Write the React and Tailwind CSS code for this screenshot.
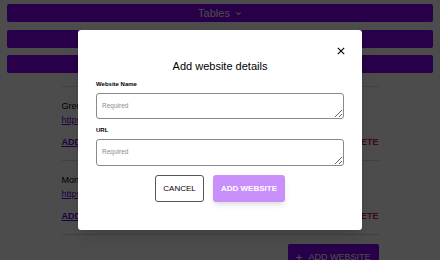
import React from 'react'

const websites = [
    { id: 1, name: 'Grenville Studio', url: 'https://grenvillestudio.com' },
    { id: 2, name: 'Monarch Travel', url: 'https://monarchtravel.co.uk' },
]

const WebsiteRow = ({ site }) => (
    <div className='border-b border-[#d9d9d9] pt-[12px] pb-[11px]'>
        <p className='text-[9px] leading-[14px] text-black'>{site.name}</p>
        <a href='#' className='block text-[9px] leading-[14px] text-[#6a00d8] underline'>{site.url}</a>
        <div className='mt-[8px] flex items-center justify-between text-[9px] leading-[14px] font-bold'>
            <a href='#' className='text-[#6a00d8] underline'>ADD CREDENTIALS</a>
            <a href='#' className='text-[#d4145a]'>DELETE</a>
        </div>
    </div>
)

const App = () => {
    return (
        <div className='relative h-[260px] w-[440px] overflow-hidden bg-white' style={{ fontFamily: '"Liberation Sans", Arial, sans-serif' }}>

            <div className='flex flex-col gap-[7.5px] px-[7px] pt-[4px]'>
                <div className='flex h-[18px] items-center justify-center gap-[5px] rounded-[2px] bg-[#8400f4] text-[11px] text-white'>
                    <span>Tables</span>
                    <svg width='7' height='7' viewBox='0 0 10 10' fill='none' stroke='currentColor' strokeWidth='1.6'><path d='M2 3.5 5 6.5 8 3.5' /></svg>
                </div>
                <div className='h-[18px] rounded-[2px] bg-[#8400f4]'></div>
                <div className='h-[18px] rounded-[2px] bg-[#8400f4]'></div>
            </div>

            <div className='mx-auto mt-[13px] w-[317px]'>
                <div className='border-t border-[#d9d9d9]'>
                    {websites.map((site) => (
                        <WebsiteRow key={site.id} site={site} />
                    ))}
                </div>
                <div className='mt-[9px] flex justify-end'>
                    <button className='flex h-[28px] w-[91px] items-center justify-center gap-[6px] rounded-[2px] bg-[#8400f4] text-[9px] text-white'>
                        <span className='text-[12px] leading-none'>+</span>
                        <span>ADD WEBSITE</span>
                    </button>
                </div>
            </div>

            {/* modal */}
            <div className='absolute inset-0 flex items-center justify-center bg-black/70'>
                <div className='relative h-[200px] w-[284px] rounded-[3px] bg-white px-[18px] pt-[30px] shadow-lg'>
                    <button className='absolute right-[17px] top-[17px] text-black'>
                        <svg width='8' height='8' viewBox='0 0 10 10' stroke='currentColor' strokeWidth='1.4'><path d='M1 1 9 9M9 1 1 9' /></svg>
                    </button>
                    <h2 className='text-center text-[11px] leading-[13px] text-black'>Add website details</h2>

                    <label className='mt-[8px] block text-[6px] font-bold leading-[7px] text-black'>Website Name</label>
                    <textarea placeholder='Required' className='mt-[5px] block h-[26px] w-full rounded-[3px] border border-[#8a8a8a] px-[5px] py-[8px] text-[6.5px] leading-[8px] placeholder:text-[#8a8a8a]'></textarea>

                    <label className='mt-[8px] block text-[6px] font-bold leading-[7px] text-black'>URL</label>
                    <textarea placeholder='Required' className='mt-[5px] block h-[27px] w-full rounded-[3px] border border-[#8a8a8a] px-[5px] py-[8px] text-[6.5px] leading-[8px] placeholder:text-[#8a8a8a]'></textarea>

                    <div className='mt-[9px] flex justify-center gap-[9px]'>
                        <button className='h-[27px] w-[49px] rounded-[3px] border border-[#555] text-[8px] text-black'>CANCEL</button>
                        <button className='h-[27px] w-[72px] rounded-[3px] bg-[#c98ffb] text-[8px] font-bold text-white shadow-md'>ADD WEBSITE</button>
                    </div>
                </div>
            </div>
        </div>
    )
}

export default App
